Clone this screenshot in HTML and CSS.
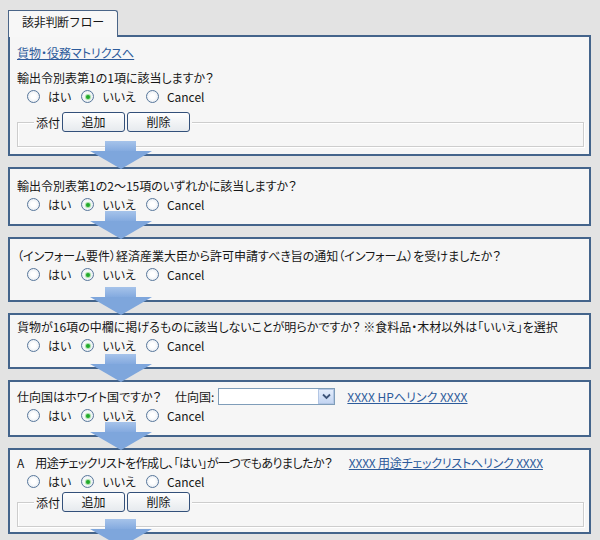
FILE: index.html
```html
<!DOCTYPE html>
<html lang="ja">
<head>
<meta charset="utf-8">
<title>該非判断フロー</title>
<link rel="stylesheet" href="styles.css">
</head>
<body>
<div class="page">
  <div class="tabbar"><div class="tab">該非判断フロー</div></div>

  <div class="step s1">
    <div class="row"><a class="link" href="#">貨物・役務マトリクスへ</a></div>
    <div class="row q1">輸出令別表第1の1項に該当しますか？</div>
    <div class="row opts">
      <span class="opt"><span class="rb"></span>はい</span>
      <span class="opt"><span class="rb on"></span>いいえ</span>
      <span class="opt"><span class="rb"></span>Cancel</span>
    </div>
    <div class="attach">
      <div class="legend"><span class="lg-text">添付</span><span class="btn">追加</span><span class="btn">削除</span></div>
    </div>
    <div class="arrow"></div>
  </div>

  <div class="step s2">
    <div class="row">輸出令別表第1の2〜15項のいずれかに該当しますか？</div>
    <div class="row opts">
      <span class="opt"><span class="rb"></span>はい</span>
      <span class="opt"><span class="rb on"></span>いいえ</span>
      <span class="opt"><span class="rb"></span>Cancel</span>
    </div>
    <div class="arrow"></div>
  </div>

  <div class="step s3">
    <div class="row">（インフォーム要件）経済産業大臣から許可申請すべき旨の通知（インフォーム）を受けましたか？</div>
    <div class="row opts">
      <span class="opt"><span class="rb"></span>はい</span>
      <span class="opt"><span class="rb on"></span>いいえ</span>
      <span class="opt"><span class="rb"></span>Cancel</span>
    </div>
    <div class="arrow"></div>
  </div>

  <div class="step s4">
    <div class="row">貨物が16項の中欄に掲げるものに該当しないことが明らかですか？ ※食料品・木材以外は「いいえ」を選択</div>
    <div class="row opts">
      <span class="opt"><span class="rb"></span>はい</span>
      <span class="opt"><span class="rb on"></span>いいえ</span>
      <span class="opt"><span class="rb"></span>Cancel</span>
    </div>
    <div class="arrow"></div>
  </div>

  <div class="step s5">
    <div class="row r5">
      <span class="q5">仕向国はホワイト国ですか？</span>
      <span class="dest">仕向国:</span>
      <span class="select"><span class="sel-btn"><svg width="9" height="7" viewBox="0 0 9 7"><path d="M1 1.5 L4.5 5 L8 1.5" fill="none" stroke="#3d5478" stroke-width="1.8"/></svg></span></span>
      <a class="link hp" href="#">XXXX HPへリンク XXXX</a>
    </div>
    <div class="row opts">
      <span class="opt"><span class="rb"></span>はい</span>
      <span class="opt"><span class="rb on"></span>いいえ</span>
      <span class="opt"><span class="rb"></span>Cancel</span>
    </div>
    <div class="arrow"></div>
  </div>

  <div class="step s6">
    <div class="row">
      <span class="q6">A　用途チェックリストを作成し、「はい」が一つでもありましたか？</span>
      <a class="link l6" href="#">XXXX 用途チェックリストへリンク XXXX</a>
    </div>
    <div class="row opts">
      <span class="opt"><span class="rb"></span>はい</span>
      <span class="opt"><span class="rb on"></span>いいえ</span>
      <span class="opt"><span class="rb"></span>Cancel</span>
    </div>
    <div class="attach">
      <div class="legend"><span class="lg-text">添付</span><span class="btn">追加</span><span class="btn">削除</span></div>
    </div>
    <div class="arrow"></div>
  </div>
</div>
</body>
</html>
```

FILE: styles.css
```css
* { box-sizing: border-box; }
html, body { margin: 0; padding: 0; }
body {
  width: 600px;
  height: 540px;
  overflow: hidden;
  background: #e3e3e3;
  font-family: "Noto Sans CJK JP", "Noto Sans", sans-serif;
  font-size: 12px;
  color: #161616;
}
.page {
  padding: 10px 9px 0 8px;
}
.tabbar {
  display: flex;
  height: 25px;
}
.tab {
  position: relative;
  z-index: 3;
  width: 110px;
  height: 27px;
  background: #f7f7f7;
  border: 1px solid #4a6588;
  border-bottom: none;
  border-radius: 0 3px 0 0;
  padding: 1px 0 0 13px;
  line-height: 19px;
  letter-spacing: -0.3px;
}
.step {
  position: relative;
  background: #f6f6f6;
  border: 2px solid #44648b;
  margin-bottom: 11px;
  padding: 7px 5px 10px 7px;
}
.row {
  line-height: 19px;
  height: 19px;
  white-space: nowrap;
  font-feature-settings: "palt";
}
.link {
  color: #2d5b9b;
  text-decoration: underline;
}
.s1 { padding-top: 6px; padding-bottom: 7px; }
.s1 .q1 { margin-top: 6px; }
.s3 { padding-bottom: 16px; }
.s4 { padding-top: 2px; padding-bottom: 12px; }
.s5 { padding-top: 4px; padding-bottom: 10px; }
.s6 { padding-top: 3px; padding-bottom: 5px; }

.opts {
  display: flex;
  align-items: center;
  padding-left: 10px;
  gap: 10px;
}
.opt {
  display: inline-flex;
  align-items: center;
}
.rb {
  width: 13px;
  height: 13px;
  border-radius: 50%;
  border: 1px solid #58779b;
  background: radial-gradient(circle at 50% 50%, #ffffff 30%, #dfe5ec 100%);
  margin-right: 8px;
  position: relative;
}
.rb.on::after {
  content: "";
  position: absolute;
  left: 3.5px;
  top: 3.5px;
  width: 4px;
  height: 4px;
  border-radius: 50%;
  background: #22a92a;
  box-shadow: 0 0 1px 1px #9fdca0;
}

.r5 {
  display: flex;
  align-items: center;
  height: 20px;
}
.q5 { width: 158px; }
.dest { margin-right: 4px; }
.select {
  position: relative;
  display: inline-block;
  width: 117px;
  height: 17px;
  background: #fff;
  border: 1px solid #7f9db9;
  margin-right: 12px;
}
.sel-btn {
  position: absolute;
  right: 0;
  top: 0;
  width: 16px;
  height: 15px;
  border: 1px solid #b3c6e4;
  background: linear-gradient(#e4edfb, #c3d5f2);
  display: flex;
  align-items: center;
  justify-content: center;
}
.q6 { margin-right: 14px; letter-spacing: -0.55px; }
.l6 { letter-spacing: -0.2px; }

.attach {
  margin-top: 16px;
  height: 25px;
  border: 1px solid #cdcdcd;
  box-shadow: inset 1px 1px 0 #ffffff, 1px 1px 0 #ffffff;
}
.s6 .attach { margin-top: 11px; }
.legend {
  display: flex;
  align-items: center;
  margin-top: -11px;
  margin-left: 16px;
  padding-left: 2px;
  width: max-content;
  background: #f6f6f6;
}
.lg-text {
  padding-right: 2px;
}
.btn {
  width: 63px;
  height: 20px;
  margin-right: 2px;
  border: 1px solid #33507a;
  border-radius: 3px;
  background: linear-gradient(#fefefe, #e6eaee);
  text-align: center;
  line-height: 18px;
}

.arrow {
  position: absolute;
  z-index: 5;
  left: 80px;
  bottom: -15px;
  width: 62px;
  height: 28px;
}
.arrow::before {
  content: "";
  position: absolute;
  left: 15px;
  top: 0;
  width: 31px;
  height: 10px;
  background: linear-gradient(#a6c3ea, #84aadf);
}
.arrow::after {
  content: "";
  position: absolute;
  left: 0;
  top: 10px;
  width: 0;
  height: 0;
  border-left: 31px solid transparent;
  border-right: 31px solid transparent;
  border-top: 18px solid #7ea6dc;
}
```
